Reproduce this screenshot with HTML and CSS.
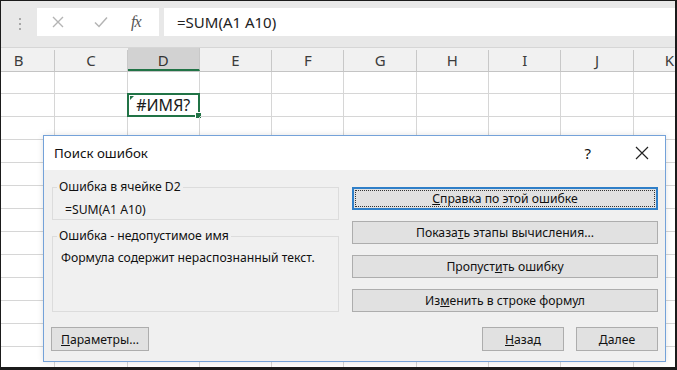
FILE: index.html
```html
<!DOCTYPE html>
<html lang="ru">
<head>
    <meta charset="UTF-8">
    <meta name="viewport" content="width=device-width, initial-scale=1.0">
    <title>Поиск ошибок</title>
    <link rel="stylesheet" href="styles.css">
</head>
<body>
    <div class="screen">
        <div class="formula-bar">
            <div class="grip"><i></i><i></i><i></i></div>
            <div class="fx-box">
                <svg class="fx-icon" width="14" height="14" viewBox="0 0 14 14"><path d="M2 2 L12 12 M12 2 L2 12" stroke="#b4b4b4" stroke-width="1.4" fill="none"/></svg>
                <svg class="fx-icon" width="16" height="14" viewBox="0 0 16 14"><path d="M2 7.5 L6 11.5 L14 2.5" stroke="#b4b4b4" stroke-width="1.5" fill="none"/></svg>
                <span class="fx">fx</span>
            </div>
            <div class="formula-input">=SUM(A1 A10)</div>
        </div>

        <div class="sheet">
            <div class="col-heads">
                <div class="col-head">B</div>
                <div class="col-head">C</div>
                <div class="col-head active">D</div>
                <div class="col-head">E</div>
                <div class="col-head">F</div>
                <div class="col-head">G</div>
                <div class="col-head">H</div>
                <div class="col-head">I</div>
                <div class="col-head">J</div>
                <div class="col-head">K</div>
            </div>
            <div class="grid" id="grid"></div>
        </div>

        <div class="dialog">
            <div class="dlg-title">
                <span>Поиск ошибок</span>
                <span class="dlg-help">?</span>
                <svg class="dlg-close" width="14" height="14" viewBox="0 0 14 14"><path d="M1 1 L13 13 M13 1 L1 13" stroke="#222" stroke-width="1.2" fill="none"/></svg>
            </div>
            <div class="dlg-body">
                <div class="dlg-left">
                    <fieldset class="group group-cell">
                        <legend>Ошибка в ячейке D2</legend>
                        <div class="group-text formula-text">=SUM(A1 A10)</div>
                    </fieldset>
                    <fieldset class="group group-error">
                        <legend>Ошибка - недопустимое имя</legend>
                        <div class="group-text">Формула содержит нераспознанный текст.</div>
                    </fieldset>
                </div>
                <div class="dlg-right">
                    <button class="btn focused"><u>С</u>правка по этой ошибке</button>
                    <button class="btn">Показа<u>т</u>ь этапы вычисления...</button>
                    <button class="btn">Пропуст<u>и</u>ть ошибку</button>
                    <button class="btn">Из<u>м</u>енить в строке формул</button>
                </div>
            </div>
            <div class="dlg-footer">
                <button class="btn btn-params"><u>П</u>араметры...</button>
                <div class="nav-buttons">
                    <button class="btn btn-nav"><u>Н</u>азад</button>
                    <button class="btn btn-nav"><u>Д</u>алее</button>
                </div>
            </div>
        </div>
    </div>

    <script>
        // пустая сетка листа: 13 строк по 10 столбцов, D2 — выделенная ячейка
        const grid = document.getElementById('grid');
        for (let r = 1; r <= 13; r++) {
            for (let c = 0; c < 10; c++) {
                const cell = document.createElement('div');
                cell.classList.add('cell');
                if (r === 2 && c === 2) {
                    cell.classList.add('selected');
                    cell.innerHTML = '<span class="err-mark"></span>#ИМЯ?<span class="fill-handle"></span>';
                }
                grid.appendChild(cell);
            }
        }
    </script>
</body>
</html>
```

FILE: styles.css
```css
body {
    margin: 0;
    background-color: #1b1b1b;
    font-family: "Noto Sans", "Open Sans", sans-serif;
}
.screen {
    position: relative;
    width: 677px;
    height: 370px;
    box-sizing: border-box;
    border-top: 1px solid #1b1b1b;
    border-left: 1px solid #1b1b1b;
    border-right: 2px solid #1b1b1b;
    border-bottom: 3px solid #1b1b1b;
    background-color: #fff;
    overflow: hidden;
}
.formula-bar {
    display: flex;
    align-items: flex-start;
    height: 47px;
    box-sizing: border-box;
    padding-top: 7px;
    background-color: #e8e8e8;
    border-bottom: 1px solid #d6d6d6;
}
.grip {
    display: flex;
    flex-direction: column;
    gap: 3px;
    width: 35px;
    align-items: center;
    padding-top: 10px;
    padding-left: 1px;
}
.grip i {
    display: block;
    width: 2px;
    height: 2px;
    background-color: #a8a8a8;
}
.fx-box {
    display: flex;
    align-items: center;
    width: 122px;
    height: 28px;
    box-sizing: border-box;
    background-color: #fff;
    padding-left: 14px;
}
.fx-box svg:first-child {
    margin-right: 28px;
}
.fx-box svg:nth-child(2) {
    margin-right: 22px;
}
.fx {
    font-family: "Liberation Serif", serif;
    font-style: italic;
    font-size: 16px;
    color: #555;
    letter-spacing: -1px;
}
.formula-input {
    flex: 1;
    height: 28px;
    margin-left: 5px;
    padding-left: 13px;
    box-sizing: border-box;
    background-color: #fff;
    font-size: 15px;
    line-height: 28px;
    color: #222;
}
.sheet {
    margin-left: -18px;
}
.col-heads {
    display: grid;
    grid-template-columns: repeat(10, 72.3px);
    height: 23px;
    background-color: #f1f1f1;
    border-bottom: 1px solid #c4c4c4;
}
.col-head {
    text-align: center;
    font-size: 15px;
    color: #3c3c3c;
    border-right: 1px solid #c8c8c8;
    margin-top: 2px;
    line-height: 20px;
}
.col-head.active {
    background-color: #d2d2d2;
    border-bottom: 2px solid #217346;
    margin-top: 0;
    padding-top: 2px;
    height: 19px;
    color: #333;
}
.grid {
    display: grid;
    grid-template-columns: repeat(10, 72.3px);
    grid-template-rows: 22px;
    grid-auto-rows: 23px;
}
.cell {
    position: relative;
    border-right: 1px solid #d6d6d6;
    border-bottom: 1px solid #d6d6d6;
}
.cell.selected {
    border: 2px solid #217346;
    margin: -1px 0 0 -1px;
    text-align: center;
    font-size: 16px;
    line-height: 20px;
    color: #1a1a1a;
}
.err-mark {
    position: absolute;
    left: 1px;
    top: 1px;
    width: 0;
    height: 0;
    border-top: 4px solid #217346;
    border-right: 4px solid transparent;
}
.fill-handle {
    position: absolute;
    right: -4px;
    bottom: -4px;
    width: 5px;
    height: 5px;
    background-color: #217346;
    border: 1px solid #fff;
}
.dialog {
    position: absolute;
    left: 42px;
    top: 134px;
    width: 623px;
    height: 227px;
    box-sizing: border-box;
    border: 1px solid #74a2d9;
    background-color: #f0f0f0;
    box-shadow: 0 0 6px rgba(0, 0, 0, 0.12);
    font-size: 12px;
    color: #111;
}
.dlg-title {
    display: flex;
    align-items: center;
    height: 34px;
    padding-left: 10px;
    background-color: #fff;
    font-size: 13.3px;
    color: #111;
}
.dlg-title span:first-child {
    flex: 1;
}
.dlg-help {
    font-size: 15px;
    margin-right: 44px;
}
.dlg-close {
    margin-right: 16px;
}
.dlg-body {
    display: grid;
    grid-template-columns: 287px 306px;
    column-gap: 13px;
    padding: 9px 7px 0 8px;
}
.group {
    margin: 0;
    padding: 0 0 0 4px;
    border: 1px solid #dcdcdc;
    min-width: 0;
}
.group legend {
    padding: 0 2px;
    font-size: 12.2px;
    line-height: 16px;
}
.group-text {
    font-size: 12.2px;
    line-height: 16px;
}
.group-cell .formula-text {
    padding: 7px 0 1px 8px;
}
.group-error {
    margin-top: 8px;
}
.group-error .group-text {
    padding: 6px 0 45px 4px;
}
.dlg-right {
    display: flex;
    flex-direction: column;
    gap: 11px;
    padding-top: 8px;
}
.btn {
    height: 23px;
    padding: 0;
    border: 1px solid #adadad;
    background-color: #e1e1e1;
    font-family: "Noto Sans", "Open Sans", sans-serif;
    font-size: 12.2px;
    color: #111;
}
.btn.focused {
    border: 2px solid #2f7fc8;
    outline: 1px dotted #333;
    outline-offset: -4px;
}
.dlg-footer {
    display: flex;
    justify-content: space-between;
    padding: 15px 7px 0 7px;
}
.btn-params {
    width: 98px;
    height: 24px;
}
.nav-buttons {
    display: flex;
    gap: 12px;
}
.btn-nav {
    width: 82px;
    height: 24px;
}
```
